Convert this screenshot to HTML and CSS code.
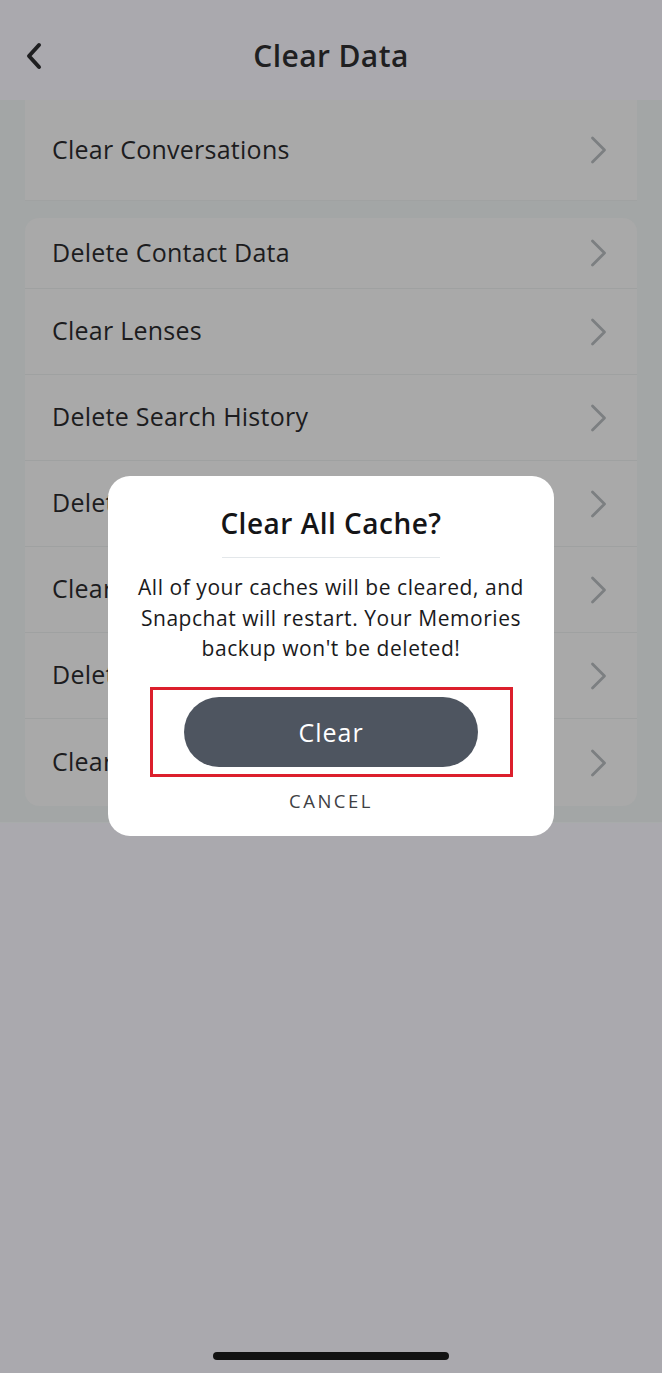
FILE: index.html
```html
<!DOCTYPE html>
<html lang="en">
<head>
  <meta charset="UTF-8">
  <meta name="viewport" content="width=device-width, initial-scale=1.0">
  <title>Clear Data</title>
  <link rel="stylesheet" href="styles.css">
</head>
<body>
  <header class="topbar">
    <button class="back" aria-label="Back">
      <svg width="20" height="28" viewBox="0 0 20 28"><path d="M15 3 L5 14 L15 25" fill="none" stroke="#1f1f21" stroke-width="4" stroke-linecap="round" stroke-linejoin="round"/></svg>
    </button>
    <h1>Clear Data</h1>
  </header>

  <main class="settings">
    <section class="group group-flat">
      <div class="row row-tall">
        <span>Clear Conversations</span>
        <svg class="chev" width="17" height="28" viewBox="0 0 17 28"><path d="M2.5 2 L14.5 14 L2.5 26" fill="none" stroke-width="2.8" stroke-linecap="round" stroke-linejoin="round"/></svg>
      </div>
    </section>

    <section class="group group-round">
      <div class="row row-first">
        <span>Delete Contact Data</span>
        <svg class="chev" width="17" height="28" viewBox="0 0 17 28"><path d="M2.5 2 L14.5 14 L2.5 26" fill="none" stroke-width="2.8" stroke-linecap="round" stroke-linejoin="round"/></svg>
      </div>
      <div class="row">
        <span>Clear Lenses</span>
        <svg class="chev" width="17" height="28" viewBox="0 0 17 28"><path d="M2.5 2 L14.5 14 L2.5 26" fill="none" stroke-width="2.8" stroke-linecap="round" stroke-linejoin="round"/></svg>
      </div>
      <div class="row">
        <span>Delete Search History</span>
        <svg class="chev" width="17" height="28" viewBox="0 0 17 28"><path d="M2.5 2 L14.5 14 L2.5 26" fill="none" stroke-width="2.8" stroke-linecap="round" stroke-linejoin="round"/></svg>
      </div>
      <div class="row">
        <span>Delete Top Locations</span>
        <svg class="chev" width="17" height="28" viewBox="0 0 17 28"><path d="M2.5 2 L14.5 14 L2.5 26" fill="none" stroke-width="2.8" stroke-linecap="round" stroke-linejoin="round"/></svg>
      </div>
      <div class="row">
        <span>Clear Cache</span>
        <svg class="chev" width="17" height="28" viewBox="0 0 17 28"><path d="M2.5 2 L14.5 14 L2.5 26" fill="none" stroke-width="2.8" stroke-linecap="round" stroke-linejoin="round"/></svg>
      </div>
      <div class="row">
        <span>Delete Shopping History</span>
        <svg class="chev" width="17" height="28" viewBox="0 0 17 28"><path d="M2.5 2 L14.5 14 L2.5 26" fill="none" stroke-width="2.8" stroke-linecap="round" stroke-linejoin="round"/></svg>
      </div>
      <div class="row row-last">
        <span>Clear Scan History</span>
        <svg class="chev" width="17" height="28" viewBox="0 0 17 28"><path d="M2.5 2 L14.5 14 L2.5 26" fill="none" stroke-width="2.8" stroke-linecap="round" stroke-linejoin="round"/></svg>
      </div>
    </section>
  </main>

  <div class="dialog">
    <h2>Clear All Cache?</h2>
    <hr>
    <p>All of your caches will be cleared, and<br>Snapchat will restart. Your Memories<br>backup won't be deleted!</p>
    <div class="highlight">
      <button class="btn-clear">Clear</button>
    </div>
    <button class="btn-cancel">CANCEL</button>
  </div>

  <div class="home-bar"></div>
</body>
</html>
```

FILE: styles.css
```css
html {
  background: #fff;
}
body {
  font-family: 'Open Sans', Lato, sans-serif;
  background: #aaa9ae;
  color: #1c1c1e;
  margin: 0;
  width: 662px;
  min-height: 1373px;
  position: relative;
}
.topbar {
  height: 100px;
  display: flex;
  align-items: center;
  justify-content: center;
  position: relative;
  box-sizing: border-box;
  padding-top: 10px;
}
.topbar h1 {
  margin: 0;
  font-size: 30px;
  font-weight: 600;
  color: #1f1f21;
  letter-spacing: 0.4px;
}
.back {
  position: absolute;
  left: 24px;
  top: 42px;
  background: none;
  border: 0;
  padding: 0;
}
.settings {
  background: #a3a6a6;
  padding: 0 25px 16px;
  border-bottom: 1px solid #a8abab;
}
.group {
  background: #a9a9a9;
}
.group-flat {
  box-shadow: 0 1px 0 #a0a2a2;
}
.group-round {
  margin-top: 18px;
  border-radius: 14px;
  overflow: hidden;
}
.row {
  height: 86px;
  display: flex;
  align-items: center;
  justify-content: space-between;
  padding: 0 30px 0 27px;
  font-size: 25px;
  letter-spacing: 0.25px;
  color: #1c1c1e;
  border-top: 1px solid #9fa1a1;
  box-sizing: border-box;
}
.row span {
  margin-top: -3px;
}
.row-tall {
  height: 100px;
  border-top: 0;
}
.row-first {
  height: 70px;
  border-top: 0;
}
.row-last {
  height: 88px;
}
.chev path {
  stroke: #7c7f81;
}
.dialog {
  position: absolute;
  left: 108px;
  top: 476px;
  width: 446px;
  height: 360px;
  box-sizing: border-box;
  background: #fff;
  border-radius: 22px;
  display: flex;
  flex-direction: column;
  align-items: center;
  padding-top: 30px;
}
.dialog h2 {
  margin: 0;
  font-size: 28px;
  font-weight: 600;
  color: #151517;
  line-height: 34px;
  letter-spacing: 0.5px;
}
.dialog hr {
  width: 218px;
  border: 0;
  border-top: 1px solid #e3e7ea;
  margin: 17px 0 14px;
}
.dialog p {
  margin: 0;
  text-align: center;
  font-size: 21px;
  line-height: 30.5px;
  letter-spacing: 0.55px;
  color: #1a1a1c;
  white-space: nowrap;
}
.highlight {
  margin-top: 23px;
  width: 363px;
  height: 90px;
  box-sizing: border-box;
  border: 3px solid #dc1f2c;
  display: flex;
  align-items: center;
  justify-content: center;
}
.btn-clear {
  width: 294px;
  height: 70px;
  border: 0;
  border-radius: 35px;
  background: #4e5560;
  color: #fff;
  font-family: inherit;
  font-size: 25px;
  letter-spacing: 1px;
  font-weight: 400;
}
.btn-cancel {
  margin-top: 10px;
  background: none;
  border: 0;
  font-family: inherit;
  font-size: 18.5px;
  letter-spacing: 2.5px;
  color: #3e4043;
}
.home-bar {
  position: absolute;
  left: 213px;
  top: 1352px;
  width: 236px;
  height: 8px;
  border-radius: 4px;
  background: #121212;
}
```
